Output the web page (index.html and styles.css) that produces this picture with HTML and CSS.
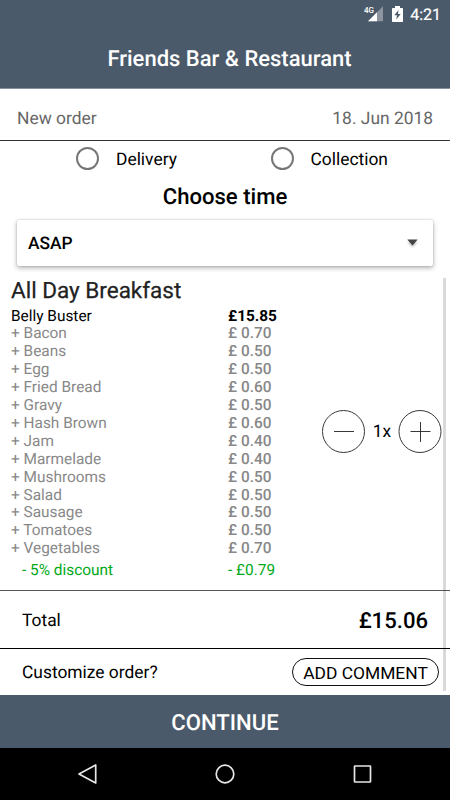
FILE: index.html
```html
<!DOCTYPE html>
<html lang="en">
<head>
<meta charset="utf-8">
<title>Friends Bar &amp; Restaurant</title>
<link rel="stylesheet" href="styles.css">
</head>
<body>
<header class="top">
  <div class="status">
    <svg class="signal" width="20" height="18" viewBox="0 0 20 18"><path d="M19 1.2V16.2H4z" fill="#8c959f"/><path d="M13 7.200V16.2H4z" fill="#fff"/><text x="0" y="7.500" class="network" textLength="10" lengthAdjust="spacingAndGlyphs">4G</text></svg>
    <svg class="battery" width="11" height="16" viewBox="0 0 11 16"><path d="M3 0h5v2h2.3q.7 0 .7.7v12.6q0 .7-.7.7H.7q-.7 0-.7-.7V2.700q0-.7.7-.7H3z" fill="#fff"/><path d="M6.500 4 2.300 9.300H5L4.300 13.500 8.700 8H6z" fill="#4b5a6a"/></svg>
    <span class="clock">4:21</span>
  </div>
  <h1 class="title">Friends Bar &amp; Restaurant</h1>
</header>
<main class="screen">
  <div class="order-head"><span>New order</span><span>18. Jun 2018</span></div>
  <div class="modes">
    <div class="mode"><i class="radio"></i><span>Delivery</span></div>
    <div class="mode"><i class="radio"></i><span>Collection</span></div>
  </div>
  <h2 class="choose">Choose time</h2>
  <div class="select"><span>ASAP</span><svg class="arrow" width="11" height="7" viewBox="0 0 11 7"><path d="M.3.500h10.400L5.500 6.500z" fill="#444"/></svg></div>
  <div class="scroll">
    <section class="basket">
      <h3 class="category">All Day Breakfast</h3>
      <div class="item">
        <div class="lines">
          <div class="line main"><span>Belly Buster</span><b>£15.85</b></div>
          <div class="line"><span>+ Bacon</span><b>£ 0.70</b></div>
          <div class="line"><span>+ Beans</span><b>£ 0.50</b></div>
          <div class="line"><span>+ Egg</span><b>£ 0.50</b></div>
          <div class="line"><span>+ Fried Bread</span><b>£ 0.60</b></div>
          <div class="line"><span>+ Gravy</span><b>£ 0.50</b></div>
          <div class="line"><span>+ Hash Brown</span><b>£ 0.60</b></div>
          <div class="line"><span>+ Jam</span><b>£ 0.40</b></div>
          <div class="line"><span>+ Marmelade</span><b>£ 0.40</b></div>
          <div class="line"><span>+ Mushrooms</span><b>£ 0.50</b></div>
          <div class="line"><span>+ Salad</span><b>£ 0.50</b></div>
          <div class="line"><span>+ Sausage</span><b>£ 0.50</b></div>
          <div class="line"><span>+ Tomatoes</span><b>£ 0.50</b></div>
          <div class="line"><span>+ Vegetables</span><b>£ 0.70</b></div>
        </div>
        <div class="stepper">
          <svg width="44" height="44" viewBox="0 0 44 44"><circle cx="21.500" cy="21.500" r="21"/><path d="M12 21.500h20"/></svg>
          <span>1x</span>
          <svg width="44" height="44" viewBox="0 0 44 44"><circle cx="22" cy="21.500" r="21"/><path d="M12.500 21.500h20M22.500 12v20"/></svg>
        </div>
      </div>
      <div class="discount"><span>- 5% discount</span><span>- £0.79</span></div>
    </section>
    <div class="total"><span>Total</span><strong>£15.06</strong></div>
    <div class="comment"><span>Customize order?</span><button class="add" type="button">ADD COMMENT</button></div>
    <div class="thumb"></div>
  </div>
</main>
<div class="continue">CONTINUE</div>
<nav class="nav">
  <svg width="24" height="24" viewBox="0 0 24 24"><path d="M19.700 3v18L3 12z"/></svg>
  <svg width="24" height="24" viewBox="0 0 24 24"><circle cx="12" cy="12" r="8.800"/></svg>
  <svg width="24" height="24" viewBox="0 0 24 24"><rect x="4.500" y="4" width="16" height="16" rx=".5"/></svg>
</nav>
</body>
</html>
```
FILE: styles.css
```css
* { box-sizing: border-box; }
body {
  margin: 0;
  width: 450px;
  height: 800px;
  display: flex;
  flex-direction: column;
  overflow: hidden;
  background: #fff;
  color: #000;
  font-family: Roboto, "Liberation Sans", sans-serif;
  font-size: 17.4px;
  text-rendering: geometricPrecision;
}
h1, h2, h3 { margin: 0; font-weight: 500; }
svg { display: block; flex: none; }

.top { height: 89px; background: #4b5a6a; color: #fff; border-bottom: 1px solid #8792a0; }
.status { height: 28px; display: flex; align-items: center; justify-content: flex-end; padding-right: 9px; }
.signal { margin-right: 8px; margin-top: 0; }
.network { font-size: 8.5px; font-weight: 500; fill: #fff; }
.battery { margin-right: 7px; }
.clock { font-size: 16px; line-height: 28px; padding-top: 1px; font-weight: 400; -webkit-text-stroke: .2px #fff; }
.title { font-size: 22px; line-height: 64px; text-align: center; padding-left: 9px; }

.screen { height: 606px; display: flex; flex-direction: column; }
.order-head {
  height: 52px;
  flex: none;
  display: flex;
  justify-content: space-between;
  align-items: center;
  padding: 8px 17px 0;
  color: #666;
  border-bottom: 1px solid #333;
}
.modes { height: 37px; flex: none; display: flex; padding-left: 76px; }
.mode { display: flex; flex: none; align-items: center; width: 194.5px; height: 35px; gap: 17px; }
.mode span { padding-top: 2px; }
.radio { width: 23px; height: 23px; border: 2px solid #777; border-radius: 50%; }
.choose { height: 42px; flex: none; font-size: 22.1px; line-height: 39px; text-align: center; }
.select {
  height: 46px;
  flex: none;
  margin: 0 17px;
  padding: 0 15px 0 11px;
  display: flex;
  align-items: center;
  justify-content: space-between;
  border-radius: 2px;
  font-weight: 500;
  box-shadow: 0 2px 5px rgba(0,0,0,.3), 0 0 2px rgba(0,0,0,.2);
}
.select span { padding-top: 2px; }
.arrow { margin-top: -2px; filter: drop-shadow(0 2px 1px rgba(0,0,0,.25)); }

.scroll { position: relative; margin-top: 12px; height: 417px; flex: none; }
.basket { height: 313px; border-bottom: 1px solid #555; }
.category { height: 28px; padding-left: 11px; font-size: 22.5px; line-height: 26px; font-weight: 400; color: #222; -webkit-text-stroke: .25px #222; }
.item { display: flex; align-items: center; justify-content: space-between; padding: 0 8px 0 11px; }
.lines { width: 290px; padding-top: .5px; font-size: 15.4px; color: #888; }
.line { display: grid; grid-template-columns: 217px 1fr; height: 17.92px; line-height: 18px; }
.line b { font-weight: 500; }
.main { color: #000; }
.line.main b { font-weight: 700; }
.stepper { display: flex; align-items: center; justify-content: space-between; width: 120px; }
.stepper span { padding-top: 1px; }
.stepper svg { fill: none; stroke: #222; stroke-width: .9; }
.discount { display: grid; grid-template-columns: 206px 1fr; padding-left: 22px; margin-top: 2.5px; font-size: 15.4px; line-height: 20px; color: #00a818; }
.total { height: 58px; display: flex; align-items: center; justify-content: space-between; padding: 2px 22px 0; border-bottom: 1px solid #000; }
.total strong { font-size: 22.1px; font-weight: 500; }
.comment { height: 46px; display: flex; align-items: center; justify-content: space-between; padding: 0 11px 0 22px; }
.comment > span { padding-top: 2px; }
.add { width: 147px; height: 28px; padding: 1px 0 0; background: #fff; color: #000; border: 1px solid #111; border-radius: 14px; font: 17.4px/26px Roboto, "Liberation Sans", sans-serif; white-space: nowrap; }
.thumb { position: absolute; right: 4px; top: 0; width: 3px; height: 413px; background: rgba(0,0,0,.15); }

.continue { height: 53px; background: #4b5a6a; color: #fff; text-align: center; font-size: 22.1px; line-height: 56px; font-weight: 500; }
.nav { height: 52px; background: #000; display: flex; justify-content: space-between; padding: 14px 76px 0; }
.nav svg { fill: none; stroke: #e6e6e6; stroke-width: 1.7; stroke-linejoin: round; }
```
